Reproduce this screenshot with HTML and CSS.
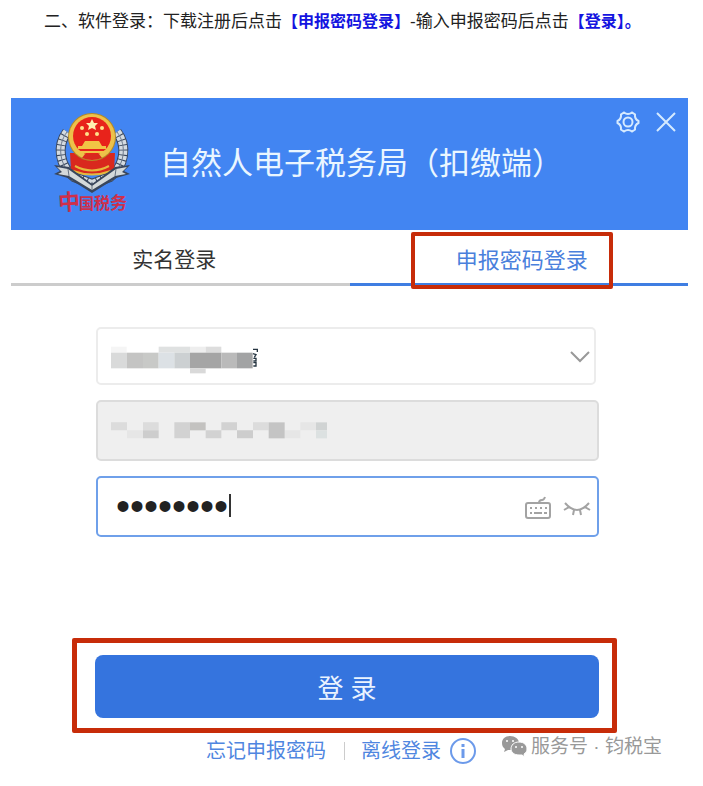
FILE: index.html
```html
<!DOCTYPE html>
<html lang="zh-CN">
<head>
  <meta charset="UTF-8">
  <meta name="viewport" content="width=device-width, initial-scale=1.0">
  <title>自然人电子税务局（扣缴端）</title>
  <link rel="stylesheet" href="styles.css">
</head>
<body>

  <p class="step">二、软件登录：下载注册后点击<strong>【申报密码登录】</strong>-输入申报密码后点击<strong>【登录】。</strong></p>

  <div class="client">

    <!-- Header -->
    <div class="header">
      <svg class="logo" viewBox="0 0 80 106" aria-hidden="true">
        <g fill="none" stroke="#39465c" stroke-width="10">
          <path d="M14 21C3 35 7 56 21 66L39 73"/>
          <path d="M64 21C75 35 71 56 57 66L39 73"/>
        </g>
        <g fill="none" stroke="#d3dae0" stroke-width="8" stroke-dasharray="4 1">
          <path d="M14 21C3 35 7 56 21 66L39 73"/>
          <path d="M64 21C75 35 71 56 57 66L39 73"/>
        </g>
        <path d="M14 21C3 35 7 56 21 66M64 21C75 35 71 56 57 66" fill="none" stroke="#6d7a8c" stroke-width="1"/>
        <path d="M17 42h45l-1 18q-22 6-43 0z" fill="#d9281e"/>
        <path d="M22 55q17 9 34 0M20 60q19 7 38 0" fill="none" stroke="#e6b93c" stroke-width="2"/>
        <path d="M1 54l15 2 23 17 23-17 15-2-6 6 6 3-14 4-24 15-24-15-14-4 6-3z" fill="#39465c"/>
        <path d="M4 56l11 2 24 17 24-17 11-2-5 5 4 2-11 2-23 14-23-14-11-2 4-2z" fill="#d4d9da"/>
        <path d="M39 75v4M15 58l1 7M63 58l-1 7" fill="none" stroke="#667282" stroke-width="1"/>
        <circle cx="39" cy="26" r="24" fill="#b58b26"/>
        <circle cx="39" cy="26" r="23" fill="#edc14a"/>
        <circle cx="39" cy="25" r="19" fill="#e8231b"/>
        <path d="M39 8l2 4h4l-3 3 1 4-4-2-4 2 1-4-3-3h4z" fill="#fff1b0"/>
        <g fill="#ffe18b">
          <circle cx="29" cy="17" r="2"/>
          <circle cx="49" cy="17" r="2"/>
          <circle cx="34" cy="23" r="2"/>
          <circle cx="44" cy="23" r="2"/>
        </g>
        <path d="M32 30h14l3 5h4v3H25v-3h4zM26 40h26v2H26z" fill="#f1c445"/>
        <path d="M32 43h14l3 4q-10 4-20 0z" fill="#d9281e"/>
        <g class="logo-text">
          <text x="5" y="99" font-size="22" transform="rotate(-3 16 90)">中</text>
          <text x="26" y="98" font-size="15">国</text>
          <text x="41" y="98" font-size="16">税</text>
          <text x="57" y="98" font-size="17">务</text>
        </g>
      </svg>
      <h1>自然人电子税务局（扣缴端）</h1>
      <div class="window-actions">
        <button type="button" aria-label="设置">
          <svg viewBox="0 0 24 24" width="24" height="24">
            <path d="M8 2.500Q12 5.500 16 2.500L19 4.500Q18.500 9 22.500 11V13Q18.500 15 19 19.500L16 21.500Q12 18.500 8 21.500L5 19.500Q5.500 15 1.500 13V11Q5.500 9 5 4.500Z"/>
            <circle cx="12" cy="12" r="4.500"/>
          </svg>
        </button>
        <button type="button" aria-label="关闭">
          <svg viewBox="0 0 24 24" width="24" height="24">
            <path d="M3 3l18 18M21 3L3 21"/>
          </svg>
        </button>
      </div>
    </div>

    <!-- Tabs -->
    <div class="tabs">
      <button type="button" class="tab">实名登录</button>
      <button type="button" class="tab active">申报密码登录</button>
    </div>

    <!-- Login form -->
    <form class="login-form">
      <div class="field field-company">
        <select aria-label="企业名称"><option value=""></option></select>
        <svg class="mosaic" viewBox="93 93 450 84" width="150" height="28" aria-hidden="true">
          <path d="M93 95h47v18H93z" fill="#f5f5f5"/>
          <path d="M236 95h94v18h-94z" fill="#dfe1e1"/>
          <path d="M330 95h47v18h-47z" fill="#eee"/>
          <path d="M377 95h47v18h-47z" fill="#ddd"/>
          <path d="M93 113h48v47H93z" fill="#d9dada"/>
          <path d="M141 113h48v47h-48z" fill="#c4c4c3"/>
          <path d="M189 113h47v47h-47z" fill="#c8c9c7"/>
          <path d="M236 113h47v47h-47z" fill="#dce1e5"/>
          <path d="M283 113h47v47h-47z" fill="#ccd0d2"/>
          <path d="M330 113h94v47h-94z" fill="#a5a5a5"/>
          <path d="M424 113h47v47h-47z" fill="#bababa"/>
          <path d="M471 113h47v47h-47z" fill="#a2a3a4"/>
          <path d="M330 160h47v15h-47z" fill="#d9d9d9"/>
          <path d="M519 103h13v8M519 116l9 3-5 8M520 130h8v8h-8M520 143h8v10h-8" fill="none" stroke="#253440" stroke-width="4"/>
        </svg>
        <svg class="chevron" viewBox="0 0 20 12" width="20" height="12" aria-hidden="true">
          <path d="M1 1l9 9 9-9"/>
        </svg>
      </div>

      <div class="field field-taxno">
        <input type="text" aria-label="纳税人识别号" disabled>
        <svg class="mosaic" viewBox="93 324 648 51" width="216" height="17" aria-hidden="true">
          <path d="M93 325h48v24H93zM189 325h47v24h-47zM519 325h47v24h-47z" fill="#dcdcdc"/>
          <path d="M141 349h48v24h-48zM614 349h47v24h-47zM661 325h47v24h-47z" fill="#e6e6e6"/>
          <path d="M283 325h47v24h-47zM377 349h47v24h-47zM283 349h47v24h-47zM424 325h47v24h-47z" fill="#d2d2d2"/>
          <path d="M330 325h47v24h-47z" fill="#c3c2c0"/>
          <path d="M189 349h47v24h-47zM471 349h48v24h-48z" fill="#cdcdcd"/>
          <path d="M566 325h48v48h-48z" fill="#c4c4c4"/>
          <path d="M708 325h33v24h-33z" fill="#d0d3d3"/>
          <path d="M708 349h33v24h-33z" fill="#dce1e1"/>
        </svg>
      </div>

      <div class="field field-password">
        <input type="password" aria-label="申报密码" value="12345678">
        <span class="caret"></span>
        <div class="field-icons">
          <button type="button" aria-label="软键盘">
            <svg viewBox="0 0 28 24" width="28" height="24">
              <rect x="2" y="7" width="24" height="15" rx="2"/>
              <path d="M15 7q0-3 3-3 2 0 3-3"/>
              <path d="M6 12h17" stroke-dasharray="2 3"/>
              <path d="M6 17h2M10 17h8M20 17h3"/>
            </svg>
          </button>
          <button type="button" aria-label="显示密码">
            <svg viewBox="0 0 28 24" width="28" height="24">
              <path d="M2 7q12 14 24 0M6 11l-5 3M22 11l5 3M11 14l-1 5M17 14l1 5"/>
            </svg>
          </button>
        </div>
      </div>

      <div class="login-frame">
        <button type="submit" class="login-btn">登 录</button>
      </div>
    </form>

    <!-- Links -->
    <div class="footer">
      <a href="#">忘记申报密码</a>
      <span class="divider"></span>
      <a href="#" class="offline">离线登录
        <svg viewBox="0 0 28 28" width="28" height="28" aria-hidden="true">
          <circle cx="14" cy="14" r="12" fill="none" stroke="#6c9aea" stroke-width="2"/>
          <path d="M14 12v9M14 7v3" stroke="#6c9aea" stroke-width="3"/>
        </svg>
      </a>
      <div class="account">
        <svg viewBox="0 0 26 22" width="26" height="22" aria-hidden="true">
          <path d="M9 1C4 1 1 4 1 8c0 3 1 4 3 6l-1 3 4-2 5 0c4-1 6-4 6-7 0-4-4-7-9-7z" fill="#999"/>
          <circle cx="6" cy="6" r="1" fill="#fff"/>
          <circle cx="12" cy="6" r="1" fill="#fff"/>
          <path d="M18 7c-5 0-8 3-8 7 0 3 3 6 8 6l3 0 3 2-1-3c2-1 3-3 3-5 0-4-3-7-8-7z" fill="#999" stroke="#fff" stroke-width="1"/>
          <circle cx="15" cy="12" r="1" fill="#fff"/>
          <circle cx="21" cy="12" r="1" fill="#fff"/>
        </svg>
        <span>服务号 · 钧税宝</span>
      </div>
    </div>
  </div>

</body>
</html>
```

FILE: styles.css
```css
/* General Styles */
* {
  box-sizing: border-box;
}

body {
  font-family: "Liberation Sans", "Noto Sans CJK SC", sans-serif;
  background-color: #fff;
  color: #222;
  margin: 0;
  padding: 8px 15px 0 11px;
}

button {
  font-family: inherit;
  background: none;
  border: none;
  padding: 0;
  cursor: pointer;
}

svg {
  display: block;
}

.step {
  margin: 0 0 62px;
  font-size: 17px;
  line-height: 28px;
  text-indent: 33px;
}

.step strong {
  font-size: 16px;
  color: #1414e0;
}

/* Header */
.header {
  display: flex;
  align-items: center;
  height: 132px;
  padding: 0 10px 0 42px;
  background-color: #4285f2;
  color: #eaf6ff;
}

.logo {
  width: 80px;
  height: 106px;
  flex-shrink: 0;
}

.logo-text {
  fill: #cf2f4a;
  font-weight: bold;
}

.header h1 {
  margin: 0 0 0 27px;
  font-size: 31px;
  font-weight: normal;
  line-height: 40px;
  white-space: nowrap;
}

.window-actions {
  display: flex;
  gap: 14px;
  align-self: flex-start;
  margin-left: auto;
  padding-top: 12px;
}

.window-actions svg {
  fill: none;
  stroke: #d5eaff;
  stroke-width: 2;
}

/* Tabs */
.tabs {
  display: grid;
  grid-template-columns: 1fr 1fr;
}

.tab {
  position: relative;
  height: 56px;
  padding: 2px 12px 0 0;
  border-bottom: 3px solid #ccc;
  font-size: 21px;
  color: #333;
}

.tab.active {
  padding: 2px 0 0 6px;
  border-bottom-color: #3f7ee2;
  font-size: 22px;
  color: #4a80dc;
}

/* Red mark around the active tab */
.tab.active::after {
  content: "";
  position: absolute;
  inset: 2px 75px -6px 61px;
  border: 4px solid #c72c09;
  border-radius: 2px;
}

/* Form */
.login-form {
  padding-top: 41px;
}

.field {
  position: relative;
  margin: 0 89px 15px 85px;
}

.field-company {
  margin-right: 92px;
}

.field select,
.field input {
  display: block;
  width: 100%;
  height: 61px;
  padding: 0 80px 0 18px;
  border: 2px solid #ececec;
  border-radius: 5px;
  background-color: #fff;
  color: #222;
  outline: none;
  appearance: none;
}

.field select {
  height: 58px;
}

.field-taxno input {
  border-color: #dcdcdc;
  background-color: #efefef;
}

.field-password input {
  border-color: #6fa0ea;
  font-family: "Liberation Sans", sans-serif;
  font-size: 40px;
}

.mosaic {
  position: absolute;
  top: 19px;
  left: 15px;
}

.field-taxno .mosaic {
  top: 22px;
}

.chevron {
  position: absolute;
  top: 24px;
  right: 6px;
  fill: none;
  stroke: #999;
  stroke-width: 2;
}

.caret {
  position: absolute;
  top: 18px;
  left: 133px;
  width: 2px;
  height: 23px;
  background-color: #333;
}

.field-icons {
  position: absolute;
  top: 20px;
  right: 8px;
  display: flex;
  gap: 11px;
}

.field-icons svg {
  fill: none;
  stroke: #a3a3a3;
  stroke-width: 2;
}

/* Login button with the red mark */
.login-frame {
  margin: 101px 71px 0 61px;
  padding: 12px 13px 10px 18px;
  border: 5px solid #c72c09;
  border-radius: 2px;
}

.login-btn {
  display: block;
  width: 100%;
  height: 63px;
  border-radius: 8px;
  background-color: #3574de;
  color: #eaf3ff;
  font-size: 26px;
}

/* Footer */
.footer {
  display: flex;
  align-items: flex-start;
  padding: 4px 0 0 195px;
  font-size: 20px;
  line-height: 28px;
  white-space: nowrap;
}

.footer a {
  color: #4f86e0;
  text-decoration: none;
}

.divider {
  width: 1px;
  height: 18px;
  margin: 5px 16px 0 18px;
  background-color: #ccc;
}

.offline {
  display: flex;
  gap: 8px;
}

.account {
  display: flex;
  gap: 4px;
  margin-left: 24px;
  font-size: 19px;
  line-height: 20px;
  color: #999;
}

.account svg {
  margin-top: -2px;
}
```
